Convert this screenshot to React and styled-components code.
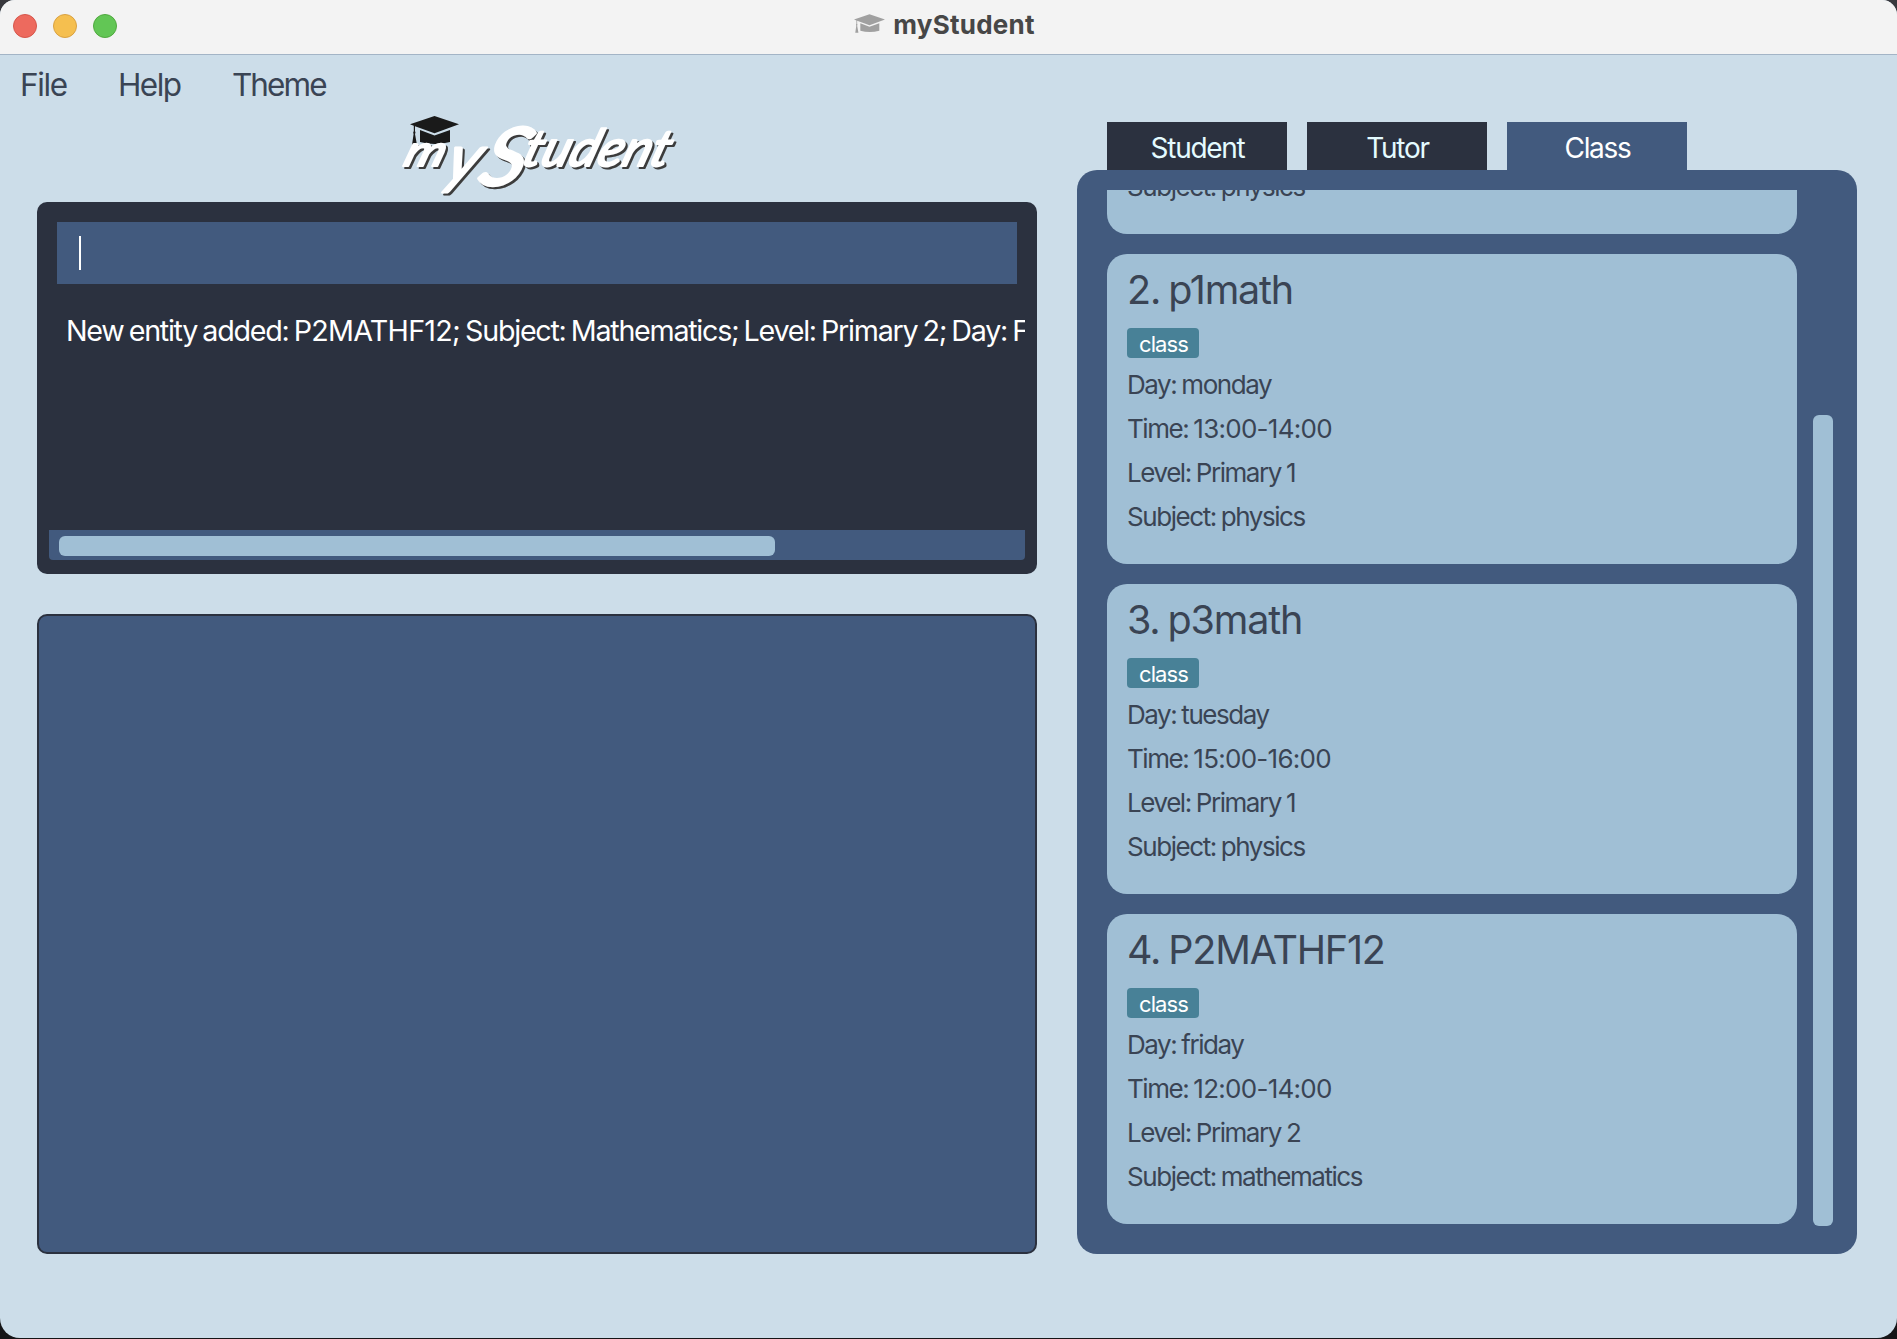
import React from "react";
import styled, { createGlobalStyle, css } from "styled-components";

const colors = {
  page: "#ccdde9",
  dark: "#2b313f",
  blue: "#425a7e",
  light: "#a0bfd5",
  ink: "#3a4454",
  badge: "#488197",
};

const Global = createGlobalStyle`
  * { box-sizing: border-box; }
  html { height: 1339px; background: linear-gradient(#38383d, #151517); }
  body { margin: 0; overflow: hidden; }
`;

const Window = styled.div`
  width: 1897px;
  height: 1338px;
  display: flex;
  flex-direction: column;
  overflow: hidden;
  border-radius: 15px 15px 20px 20px;
  background: ${colors.page};
  font-family: Inter, "Liberation Sans", sans-serif;
  color: ${colors.ink};
  white-space: nowrap;
`;

const TitleBar = styled.header`
  flex: none;
  height: 55px;
  display: grid;
  grid-template-columns: 1fr auto 1fr;
  background: #f3f3f3;
  border-bottom: 1px solid #a3b4c6;
`;

const Lights = styled.div`
  display: flex;
  gap: 16px;
  padding: 14px 0 0 13px;
`;

const Light = styled.span`
  width: 24px;
  height: 24px;
  border-radius: 50%;
  background: ${(p) => p.$fill};
  border: 1px solid ${(p) => p.$edge};
`;

const Title = styled.div`
  display: flex;
  gap: 8px;
  padding: 9px 8px 0 0;
  height: 54px;
  font-size: 26px;
  line-height: 32px;
  font-weight: 700;
  letter-spacing: 0.25px;
  color: #474747;
  svg { margin-top: 5px; }
`;

const MenuBar = styled.nav`
  flex: none;
  height: 60px;
  display: flex;
  gap: 51.3px;
  padding: 10px 0 0 20px;
`;

const MenuItem = styled.span`
  font-size: 31.5px;
  line-height: 40px;
  letter-spacing: ${(p) => p.$track}px;
`;

const Body = styled.main`
  display: flex;
  gap: 40px;
  padding: 0 40px 0 37px;
  height: 1139px;
`;

const LeftColumn = styled.section`
  width: 1000px;
  display: flex;
  flex-direction: column;
`;

const LogoRow = styled.div`
  height: 87px;
  padding-left: 353px;
  svg { display: block; overflow: visible; }
`;

const LogoWords = styled.g`
  filter: drop-shadow(2.5px 2.5px 0 #3c3c3c);
`;

const LogoText = styled.text`
  font-family: Lato, "Liberation Sans", sans-serif;
  font-style: italic;
  font-weight: 400;
  fill: #fff;
  stroke: #fff;
  stroke-width: ${(p) => p.$weight ?? 2.2};
  stroke-linejoin: round;
  stroke-linecap: round;
`;

const Console = styled.div`
  height: 372px;
  padding: 20px 12px 14px;
  border-radius: 10px;
  background: ${colors.dark};
  display: flex;
  flex-direction: column;
`;

const CommandInput = styled.div`
  height: 62px;
  margin: 0 8px;
  padding: 14px 22px;
  background: ${colors.blue};
`;

const Caret = styled.div`
  width: 2px;
  height: 34px;
  background: #fff;
`;

const Message = styled.div`
  flex: 1;
  overflow: hidden;
  padding: 29px 0 0 17px;
  font-size: 28.7px;
  line-height: 36px;
  letter-spacing: -1.27px;
  word-spacing: -1.6px;
  color: #fff;
`;

const Code = styled.span`
  letter-spacing: -0.75px;
`;

const HTrack = styled.div`
  height: 30px;
  padding: 6px 10px 4px;
  background: ${colors.blue};
  border-radius: 0 0 4px 4px;
`;

const Thumb = styled.div`
  border-radius: 6px;
  background: ${colors.light};
  ${(p) =>
    p.$vertical
      ? css`width: 20px; height: 811px; margin-top: 225px;`
      : css`width: 716px; height: 20px;`}
`;

const Detail = styled.div`
  height: 640px;
  margin-top: 40px;
  background: ${colors.blue};
  border: 2px solid ${colors.dark};
  border-radius: 10px;
`;

const RightColumn = styled.section`
  width: 780px;
  padding-top: 7px;
`;

const Tabs = styled.div`
  display: flex;
  gap: 20px;
  padding-left: 30px;
`;

const Tab = styled.div`
  width: 180px;
  height: 48px;
  padding: 8px 0 0 1px;
  text-align: center;
  font-size: 28px;
  line-height: 36px;
  letter-spacing: -1.3px;
  color: ${(p) => (p.$active ? "#fff" : "#e4fbff")};
  background: ${(p) => (p.$active ? colors.blue : colors.dark)};
`;

const ListPanel = styled.div`
  height: 1084px;
  padding: 20px 24px 20px 30px;
  display: flex;
  gap: 16px;
  border-radius: 20px;
  background: ${colors.blue};
`;

const List = styled.div`
  width: 690px;
  height: 1034px;
  display: flex;
  flex-direction: column;
  justify-content: flex-end;
  gap: 20px;
  overflow: hidden;
`;

const Card = styled.article`
  flex: none;
  height: 310px;
  padding: 12px 20px 0;
  border-radius: 20px;
  background: ${colors.light};
`;

const Name = styled.h2`
  margin: 0;
  font-size: 39.5px;
  line-height: 48px;
  font-weight: 400;
  letter-spacing: -1.2px;
  word-spacing: -1.8px;
`;

const Badge = styled.span`
  display: block;
  width: 72px;
  height: 30px;
  margin: 14px 0 5px;
  padding-left: 12px;
  border-radius: 4px;
  background: ${colors.badge};
  color: #fff;
  font-size: 22px;
  line-height: 32px;
  letter-spacing: -0.9px;
`;

const Field = styled.div`
  height: 44px;
  font-size: 26px;
  line-height: 44px;
  letter-spacing: -1.44px;
  word-spacing: -0.9px;
`;

const Digits = styled.span`
  letter-spacing: -0.72px;
`;

const classes = [
  { name: "p0math", day: "sunday", time: "12:00-13:00", level: "Primary 1", subject: "physics" },
  { name: "p1math", day: "monday", time: "13:00-14:00", level: "Primary 1", subject: "physics" },
  { name: "p3math", day: "tuesday", time: "15:00-16:00", level: "Primary 1", subject: "physics" },
  { name: "P2MATHF12", day: "friday", time: "12:00-14:00", level: "Primary 2", subject: "mathematics" },
];

function Cap({ width, height, color }) {
  return (
    <svg width={width} height={height} viewBox="0 0 49 29" fill={color}>
      <path d="M24.5 0 L49 8.2 L24.5 17.2 L5 10.2 L5 15 Q6 17 5 18 L7 29 L2 29 L3.6 18 Q2.6 17 3.8 15 L3.8 9.7 L0 8.2Z" />
      <path d="M10 14 L24.5 19.5 L40 14 V26 Q25 30 10 26Z" />
    </svg>
  );
}

function Logo() {
  return (
    <svg width="300" height="87" viewBox="0 0 300 87">
      <g transform="translate(20 1)">
        <Cap width={49} height={29} color="#1a1a1a" />
      </g>
      <LogoWords>
        <LogoText transform="translate(12 51) skewX(-18)" fontSize="43" textLength="40" lengthAdjust="spacingAndGlyphs">m</LogoText>
        <LogoText transform="translate(52 66) skewX(-18)" fontSize="66" textLength="33" lengthAdjust="spacingAndGlyphs">y</LogoText>
        <LogoText $weight={3} transform="translate(86 70) skewX(-18)" fontSize="80" textLength="44" lengthAdjust="spacingAndGlyphs">S</LogoText>
        <LogoText transform="translate(130 51) skewX(-18)" fontSize="51" textLength="146" lengthAdjust="spacingAndGlyphs">tudent</LogoText>
      </LogoWords>
    </svg>
  );
}

export default function App() {
  return (
    <>
      <Global />
      <Window>
        <TitleBar>
          <Lights>
            <Light $fill="#ed6a5e" $edge="#d5564b" />
            <Light $fill="#f5bf4f" $edge="#d8a142" />
            <Light $fill="#62c655" $edge="#50a83f" />
          </Lights>
          <Title>
            <Cap width={31} height={19} color="#a0a0a0" />
            myStudent
          </Title>
        </TitleBar>
        <MenuBar>
          <MenuItem $track={-1.4}>File</MenuItem>
          <MenuItem $track={-1.5}>Help</MenuItem>
          <MenuItem $track={-1.9}>Theme</MenuItem>
        </MenuBar>
        <Body>
          <LeftColumn>
            <LogoRow><Logo /></LogoRow>
            <Console>
              <CommandInput><Caret /></CommandInput>
              <Message>New entity added: <Code>P2MATHF12;</Code> Subject: Mathematics; Level: Primary 2; Day: Friday</Message>
              <HTrack><Thumb /></HTrack>
            </Console>
            <Detail />
          </LeftColumn>
          <RightColumn>
            <Tabs>
              <Tab>Student</Tab>
              <Tab>Tutor</Tab>
              <Tab $active>Class</Tab>
            </Tabs>
            <ListPanel>
              <List>
                {classes.map((c, i) => (
                  <Card key={c.name}>
                    <Name>{i + 1}. {c.name}</Name>
                    <Badge>class</Badge>
                    <Field>Day: {c.day}</Field>
                    <Field>Time: <Digits>{c.time}</Digits></Field>
                    <Field>Level: {c.level}</Field>
                    <Field>Subject: {c.subject}</Field>
                  </Card>
                ))}
              </List>
              <Thumb $vertical />
            </ListPanel>
          </RightColumn>
        </Body>
      </Window>
    </>
  );
}
